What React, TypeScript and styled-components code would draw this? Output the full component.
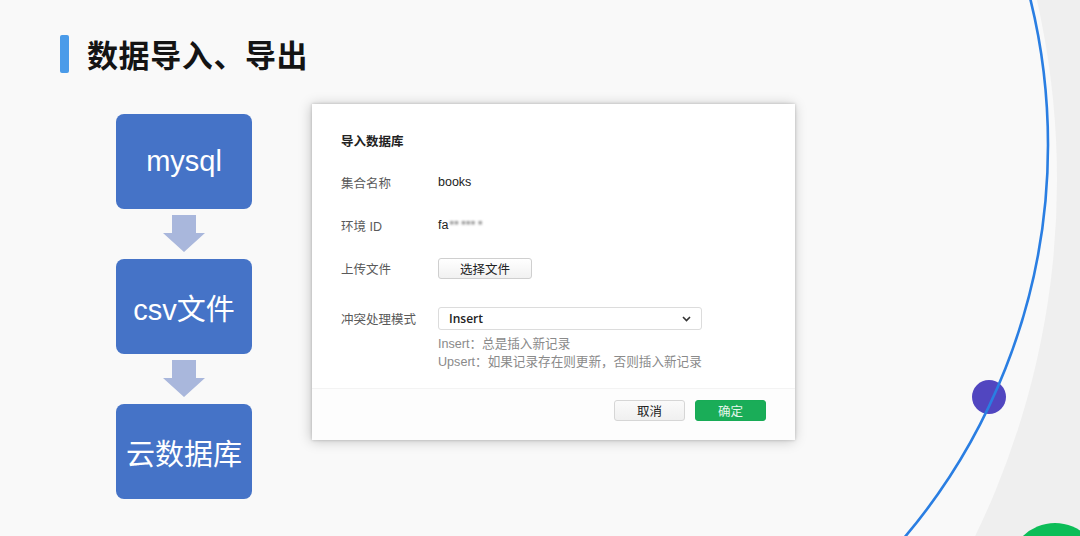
import React from 'react';
import styled, { createGlobalStyle } from 'styled-components';

const GlobalStyle = createGlobalStyle`
  html, body {
    margin: 0;
    padding: 0;
    background: #efefef;
  }
  body {
    font-family: "Liberation Sans", "Noto Sans CJK SC", sans-serif;
  }
`;

const steps = ['mysql', 'csv文件', '云数据库'];

const App: React.FC = () => {
  return (
    <Page>
      <GlobalStyle />
      <Backdrop />
      <Header>
        <TitleMark />
        <Title>数据导入、导出</Title>
      </Header>
      <Main>
        <Flow>
          {steps.map((step, i) => (
            <React.Fragment key={step}>
              {i > 0 && (
                <ArrowSlot>
                  <DownArrow />
                </ArrowSlot>
              )}
              <StepBox>{step}</StepBox>
            </React.Fragment>
          ))}
        </Flow>
        <Dialog>
          <DialogBody>
            <DialogTitle>导入数据库</DialogTitle>
            <Field $gap={19}>
              <Label>集合名称</Label>
              <Value>books</Value>
            </Field>
            <Field $gap={21}>
              <Label>环境 ID</Label>
              <Value>
                fa<Blurred>■■ ■■■ ■</Blurred>
              </Value>
            </Field>
            <Field $gap={21}>
              <Label>上传文件</Label>
              <FileButton>选择文件</FileButton>
            </Field>
            <Field $gap={28}>
              <Label>冲突处理模式</Label>
              <Select>
                <span>Insert</span>
                <Chevron />
              </Select>
            </Field>
            <Hints>
              <div>Insert：总是插入新记录</div>
              <div>Upsert：如果记录存在则更新，否则插入新记录</div>
            </Hints>
          </DialogBody>
          <Footer>
            <FooterButton>取消</FooterButton>
            <FooterButton $primary>确定</FooterButton>
          </Footer>
        </Dialog>
      </Main>
    </Page>
  );
};

const Backdrop: React.FC = () => (
  <Decor viewBox="0 0 1080 536" width={1080} height={536}>
    <circle cx={242} cy={180} r={815} fill="#f9f9f9" />
    <circle cx={1055} cy={569} r={46} fill="#0cbd58" />
    <circle cx={989} cy={397} r={17} fill="#5146c0" />
    <circle cx={440} cy={145} r={608} fill="none" stroke="#2a7ee2" strokeWidth={2.6} />
  </Decor>
);

const DownArrow: React.FC = () => (
  <svg width={42} height={37} viewBox="0 0 42 37">
    <path d="M9 0 H33 V18 H42 L21 37 L0 18 H9 Z" fill="#a9b7dc" />
  </svg>
);

const Chevron: React.FC = () => (
  <svg width={9} height={6} viewBox="0 0 9 6">
    <path d="M1 1 L4.5 4.5 L8 1" fill="none" stroke="#333" strokeWidth={1.6} />
  </svg>
);

const Page = styled('div')`
  position: relative;
  width: 1080px;
  height: 536px;
  overflow: hidden;
  box-sizing: border-box;
  padding: 35px 0 0 60px;
`;

const Decor = styled('svg')`
  position: absolute;
  left: 0;
  top: 0;
  z-index: 0;
`;

const Header = styled('div')`
  position: relative;
  z-index: 1;
  display: flex;
  align-items: center;
  gap: 18px;
  height: 38px;
`;

const TitleMark = styled('div')`
  width: 9px;
  height: 38px;
  border-radius: 2px;
  background: #4a9be9;
`;

const Title = styled('h1')`
  margin: 0;
  font-family: "Noto Sans CJK SC", sans-serif;
  font-size: 31px;
  font-weight: 700;
  line-height: 38px;
  letter-spacing: 0.6px;
  color: #141414;
`;

const Main = styled('div')`
  position: relative;
  z-index: 1;
  display: flex;
  align-items: flex-start;
  margin-top: 31px;
`;

const Flow = styled('div')`
  display: flex;
  flex-direction: column;
  width: 136px;
  margin: 10px 0 0 56px;
`;

const StepBox = styled('div')`
  height: 95px;
  border-radius: 8px;
  background: #4573c7;
  color: #ffffff;
  display: flex;
  align-items: center;
  justify-content: center;
  font-family: "Liberation Sans", "Noto Sans CJK SC", sans-serif;
  font-size: 29px;
`;

const ArrowSlot = styled('div')`
  height: 50px;
  display: flex;
  align-items: center;
  justify-content: center;
  padding-bottom: 1px;
  box-sizing: border-box;
`;

const Dialog = styled('div')`
  width: 483px;
  height: 336px;
  margin-left: 60px;
  background: #ffffff;
  box-shadow: 0 0 3px rgba(0, 0, 0, 0.2), -1px 1px 12px rgba(0, 0, 0, 0.22);
  display: flex;
  flex-direction: column;
  font-family: "Liberation Sans", "Noto Sans CJK SC", sans-serif;
  font-size: 12px;
`;

const DialogBody = styled('div')`
  flex: 1;
  padding: 28px 29px 0;
`;

const DialogTitle = styled('div')`
  font-weight: 700;
  font-size: 12.5px;
  line-height: 20px;
  color: #222;
`;

const Field = styled('div')<{ $gap: number }>`
  display: flex;
  align-items: center;
  min-height: 22px;
  margin-top: ${(p) => p.$gap}px;
`;

const Label = styled('div')`
  width: 97px;
  flex: none;
  color: #5a5a5a;
  font-size: 12.5px;
`;

const Value = styled('div')`
  color: #222;
  font-size: 12.5px;
  display: flex;
  align-items: center;
`;

const Blurred = styled('span')`
  margin-left: 1px;
  color: #9a9a9a;
  font-size: 7px;
  letter-spacing: 0.5px;
  filter: blur(1px);
  transform: translateY(-3px);
`;

const FileButton = styled('div')`
  width: 94px;
  height: 21px;
  box-sizing: border-box;
  border: 1px solid #cfcfcf;
  border-radius: 3px;
  background: linear-gradient(#ffffff, #f1f1f1);
  display: flex;
  align-items: center;
  justify-content: center;
  color: #222;
  font-size: 12.5px;
`;

const Select = styled('div')`
  width: 264px;
  height: 23px;
  box-sizing: border-box;
  border: 1px solid #dcdcdc;
  border-radius: 3px;
  padding: 0 10px 0 10px;
  display: flex;
  align-items: center;
  justify-content: space-between;
  color: #222;
  font-family: "Open Sans", "Noto Sans CJK SC", sans-serif;
  font-size: 12px;
  font-weight: 600;
`;

const Hints = styled('div')`
  margin: 5px 0 0 97px;
  color: #8a8a8a;
  font-size: 12.6px;
  line-height: 18px;
`;

const Footer = styled('div')`
  height: 52px;
  box-sizing: border-box;
  border-top: 1px solid #f3f3f3;
  background: #fdfdfd;
  display: flex;
  justify-content: flex-end;
  gap: 10px;
  padding: 11px 29px 0 0;
`;

const FooterButton = styled('div')<{ $primary?: boolean }>`
  width: 71px;
  height: 21px;
  box-sizing: border-box;
  border-radius: 3px;
  border: 1px solid ${(p) => (p.$primary ? '#18ab56' : '#d6d6d6')};
  background: ${(p) => (p.$primary ? '#1aad58' : 'linear-gradient(#fafafa, #f0f0f0)')};
  color: ${(p) => (p.$primary ? '#e6f6ec' : '#222')};
  display: flex;
  align-items: center;
  justify-content: center;
  font-size: 12.5px;
`;

export default App;
